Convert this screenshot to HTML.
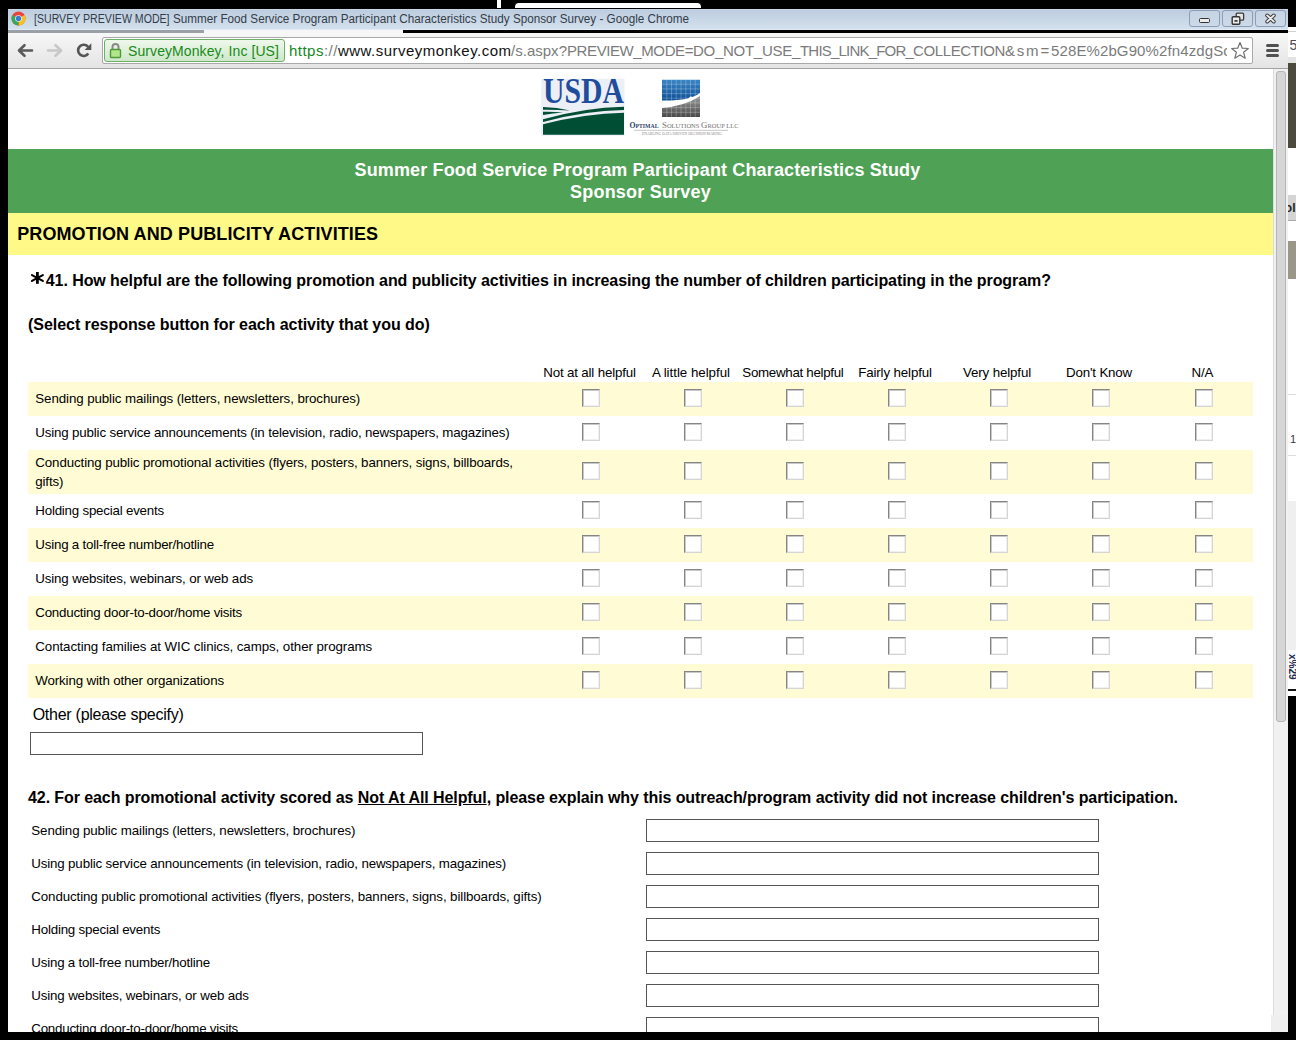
<!DOCTYPE html><html><head><meta charset="utf-8"><style>
*{margin:0;padding:0;box-sizing:border-box}
html,body{width:1296px;height:1040px;overflow:hidden;background:#000;font-family:"Liberation Sans",sans-serif}
.a{position:absolute}
.t{position:absolute;white-space:pre}
.cb{position:absolute;width:18px;height:18px;background:#fff;border-style:solid;border-width:1px;border-color:#858585 #d5d5d5 #d5d5d5 #858585;box-shadow:inset 1px 1px 0 #c9c9c9, inset -1px -1px 0 #f0f0f0}
.inp{position:absolute;height:23px;border:1px solid #555;background:#fff}
</style></head><body>
<div class="a" style="left:497px;top:0;width:4px;height:8px;background:#fff"></div><div class="a" style="left:515px;top:3px;width:186px;height:5px;background:#fff;border-radius:4px 4px 0 0"></div><div class="a" style="left:8px;top:9px;width:1280px;height:21px;background:linear-gradient(#bdcddf,#d3e0ed);border-top:1px solid #c7d6e6;border-bottom:1px solid #dfeaf6"></div><svg class="a" style="left:11px;top:11px" width="15" height="15" viewBox="0 0 30 30">
<circle cx="15" cy="15" r="14" fill="#e8453c"/>
<path d="M15 15 L27.1 8 A14 14 0 0 1 15 29 Z" fill="#fbc119"/>
<path d="M15 15 L15 29 A14 14 0 0 1 2.9 8 Z" fill="#3aa757"/>
<circle cx="15" cy="15" r="6.6" fill="#fff"/><circle cx="15" cy="15" r="5.4" fill="#3a7bd5"/></svg><div class="t" style="left:34.3px;top:12.84px;font-size:12px;line-height:12px;color:#333c48;transform:scaleX(0.8825);transform-origin:0 0;">[SURVEY PREVIEW MODE]</div>
<div class="t" style="left:173.2px;top:12.84px;font-size:12px;line-height:12px;color:#333c48;transform:scaleX(0.9746);transform-origin:0 0;">Summer Food Service Program Participant Characteristics Study Sponsor Survey - Google Chrome</div>
<div class="a" style="left:1189px;top:10px;width:31px;height:17px;border:1px solid #8e9cb5;border-radius:3px;background:linear-gradient(#c5d3e3,#ccd9e8)"></div><div class="a" style="left:1222px;top:10px;width:31px;height:17px;border:1px solid #8e9cb5;border-radius:3px;background:linear-gradient(#c5d3e3,#ccd9e8)"></div><div class="a" style="left:1255px;top:10px;width:31px;height:17px;border:1px solid #8e9cb5;border-radius:3px;background:linear-gradient(#c5d3e3,#ccd9e8)"></div><div class="a" style="left:1199px;top:18px;width:11px;height:5px;background:#ececec;border:1px solid #333;border-radius:1.5px"></div><svg class="a" style="left:1230px;top:12px" width="16" height="14" viewBox="0 0 16 14">
<rect x="6.2" y="1.2" width="7.4" height="7" rx="1" fill="#e6e6e6" stroke="#3a3a3a" stroke-width="1.3"/>
<rect x="2.2" y="4.7" width="7.6" height="7.6" rx="1" fill="#ececec" stroke="#333" stroke-width="1.4"/>
<rect x="4.4" y="8" width="3.2" height="1.8" fill="#444"/></svg><svg class="a" style="left:1264px;top:13px" width="13" height="11" viewBox="0 0 13 11">
<path d="M3.2 2.4 L9.8 8.6 M9.8 2.4 L3.2 8.6" stroke="#3a3a3a" stroke-width="3.8" stroke-linecap="round"/>
<path d="M3.2 2.4 L9.8 8.6 M9.8 2.4 L3.2 8.6" stroke="#efefef" stroke-width="1.9" stroke-linecap="round"/></svg><div class="a" style="left:8px;top:30px;width:196px;height:3px;background:#9ba0a6"></div><div class="a" style="left:204px;top:30px;width:199px;height:3px;background:#f6f6f6"></div><div class="a" style="left:8px;top:33px;width:1280px;height:35px;background:linear-gradient(#f7f7f7,#e4e4e4)"></div><div class="a" style="left:8px;top:68px;width:1280px;height:1px;background:#a3a3a3"></div><svg class="a" style="left:16px;top:42px" width="20" height="17" viewBox="0 0 20 17">
<path d="M8.5 3.2 L3 8.5 L8.5 13.8 M3.5 8.5 L16 8.5" fill="none" stroke="#5a5a5a" stroke-width="2.6" stroke-linecap="round" stroke-linejoin="round"/></svg><svg class="a" style="left:45px;top:42px" width="20" height="17" viewBox="0 0 20 17">
<path d="M10.5 3.2 L16 8.5 L10.5 13.8 M15.5 8.5 L3 8.5" fill="none" stroke="#c8c8c8" stroke-width="2.6" stroke-linecap="round" stroke-linejoin="round"/></svg><svg class="a" style="left:75px;top:42px" width="18" height="17" viewBox="0 0 18 17">
<path d="M13.3 11.6 A5.6 5.6 0 1 1 13.2 5" fill="none" stroke="#555" stroke-width="2.6"/>
<path d="M16.3 1.2 L16.3 8 L9.6 8 Z" fill="#555"/></svg><div class="a" style="left:102px;top:37px;width:1151px;height:27px;background:#fff;border:1px solid #a9a9a9;border-radius:2px"></div><div class="a" style="left:104px;top:39px;width:181px;height:23px;background:linear-gradient(#eef8ec,#cfe8cb);border:1px solid #6fb069;border-radius:3px"></div><svg class="a" style="left:109px;top:42px" width="13" height="17" viewBox="0 0 13 17">
<path d="M3.5 7.5 V5 A3 3 0 0 1 9.5 5 V7.5" fill="none" stroke="#8a8a8a" stroke-width="2"/>
<rect x="1.5" y="7.5" width="10" height="8" rx="1" fill="#b3e58a" stroke="#4e9a3a" stroke-width="1.4"/></svg><div class="t " style="left:128px;top:44.15px;font-size:14px;line-height:14px;color:#178a17;letter-spacing:0.086px;">SurveyMonkey, Inc [US]</div>
<div class="a" style="left:286px;top:38px;width:941px;height:25px;overflow:hidden"><div class="t" style="left:3px;top:5.30px;font-size:15px;line-height:15px;letter-spacing:0.482px"><span style="color:#12891a">https</span><span style="color:#7b7b7b">://</span><span style="color:#111">www.surveymonkey.com</span></div><div class="t" style="left:225px;top:5.30px;font-size:15px;line-height:15px;letter-spacing:0.016px;color:#7b7b7b">/s.aspx?</div><div class="t" style="left:281px;top:5.30px;font-size:15px;line-height:15px;letter-spacing:-0.405px;color:#7b7b7b">PREVIEW_MODE=</div><div class="t" style="left:407px;top:5.30px;font-size:15px;line-height:15px;letter-spacing:-0.274px;color:#7b7b7b">DO_NOT_USE_</div><div class="t" style="left:514px;top:5.30px;font-size:15px;line-height:15px;letter-spacing:-0.799px;color:#7b7b7b">THIS_LINK_FOR_</div><div class="t" style="left:627px;top:5.30px;font-size:15px;line-height:15px;letter-spacing:-0.384px;color:#7b7b7b">COLLECTION</div><div class="t" style="left:719px;top:5.30px;font-size:15px;line-height:15px;letter-spacing:1.809px;color:#7b7b7b">&amp;sm=</div><div class="t" style="left:765px;top:5.30px;font-size:15px;line-height:15px;letter-spacing:0.117px;color:#7b7b7b">528E%2bG90%2fn4zdgSc</div></div><svg class="a" style="left:1230px;top:41px" width="20" height="20" viewBox="0 0 20 20">
<path d="M10 1.6 L12.3 7.2 L18.3 7.5 L13.6 11.3 L15.2 17.2 L10 13.9 L4.8 17.2 L6.4 11.3 L1.7 7.5 L7.7 7.2 Z" fill="#fff" stroke="#707070" stroke-width="1.2" stroke-linejoin="round"/></svg><div class="a" style="left:1266px;top:44px;width:13px;height:3px;border-radius:1.5px;background:#505050"></div><div class="a" style="left:1266px;top:49px;width:13px;height:3px;border-radius:1.5px;background:#505050"></div><div class="a" style="left:1266px;top:54px;width:13px;height:3px;border-radius:1.5px;background:#505050"></div><div class="a" style="left:1288px;top:27px;width:8px;height:30px;background:#fff"></div><div class="a" style="left:1288px;top:31px;width:8px;height:1px;background:#d0d0d0"></div><div class="t " style="left:1289.5px;top:38.15px;font-size:14px;line-height:14px;color:#4a4a55;letter-spacing:0.000px;">5</div>
<div class="a" style="left:1288px;top:57px;width:8px;height:6px;background:#e3e3e3"></div><div class="a" style="left:1288px;top:63px;width:8px;height:85px;background:#4b4a3d"></div><div class="a" style="left:1288px;top:148px;width:8px;height:548px;background:#fff"></div><div class="a" style="left:1288px;top:195px;width:8px;height:26px;background:#d4d4d4;border-bottom:1px solid #a8a8a8"></div><div class="a" style="left:1288px;top:195px;width:8px;height:25px;overflow:hidden"><div class="t " style="left:-3.2px;top:6.84px;font-size:12px;line-height:12px;font-weight:bold;color:#222;letter-spacing:0.000px;">oll</div>
</div><div class="a" style="left:1288px;top:241px;width:8px;height:38px;background:#9a978a"></div><div class="a" style="left:1288px;top:394px;width:8px;height:1px;background:#ddd"></div><div class="t " style="left:1290px;top:433.69px;font-size:11px;line-height:11px;color:#333;letter-spacing:0.000px;">1</div>
<div class="a" style="left:1288px;top:455px;width:8px;height:1px;background:#ddd"></div><div class="a" style="left:1288px;top:501px;width:8px;height:149px;background:#efefef"></div><div class="a" style="left:1288px;top:689px;width:8px;height:2px;background:#111"></div><svg class="a" style="left:1288px;top:650px" width="8" height="39" viewBox="0 0 8 39"><text transform="translate(0.8,4) rotate(90)" font-family="Liberation Sans" font-size="10" font-weight="bold" fill="#1e2a50">x%29</text></svg><div class="a" style="left:8px;top:69px;width:1265px;height:963px;background:#fff;overflow:hidden" id="c"></div><div class="a" style="left:1273px;top:69px;width:15px;height:963px;background:#f1f1f1;border-left:1px solid #dcdcdc"></div><div class="a" style="left:1276px;top:71px;width:10px;height:651px;background:#d6d6d6;border:1px solid #b5b5b5;border-radius:3px"></div><div class="a" style="left:1271px;top:1015px;width:16px;height:17px;background:#efefef"></div><div class="a" style="left:0;top:0;width:1273px;height:1032px;overflow:hidden;clip-path:inset(69px 0 0 8px)"><svg class="a" style="left:541px;top:78px" width="85" height="59" viewBox="541 78 85 59">
<rect x="541.2" y="78.8" width="83.3" height="57" fill="#eceff6"/>
<text x="583.5" y="103.3" text-anchor="middle" font-family="Liberation Serif" font-weight="bold" font-size="35" fill="#1f4d9d" textLength="81" lengthAdjust="spacingAndGlyphs">USDA</text>
<path d="M543 107 L543 109.8 Q556 109.6 570 110.6 Q557 107.4 543 107 Z" fill="#004f35"/>
<path d="M543 111.8 L543 115 Q553 113.6 563 112.6 Q553 111.5 543 111.8 Z" fill="#004f35"/>
<path d="M543 119.3 Q585 107.6 624 106.8 L624 110 Q585 110.6 543 121.9 Z" fill="#004f35"/>
<path d="M543 124.3 Q585 113.6 624 112.8 L624 134.8 L543 134.8 Z" fill="#004f35"/>
</svg><svg class="a" style="left:660px;top:78px" width="42" height="41" viewBox="660 78 42 41"><defs><linearGradient id="bl" x1="0" y1="0" x2="0" y2="1"><stop offset="0" stop-color="#3b86c4"/><stop offset="1" stop-color="#0d4f96"/></linearGradient><linearGradient id="gr" x1="0" y1="0" x2="0" y2="1"><stop offset="0" stop-color="#9a9a9a"/><stop offset="1" stop-color="#4a4a4a"/></linearGradient><clipPath id="cp"><rect x="662" y="79.5" width="38" height="37.5"/></clipPath></defs><g clip-path="url(#cp)"><path d="M662 79.5 L700 79.5 L700 93 Q690 101 662 100.5 Z" fill="url(#bl)"/><path d="M662 108 Q685 106 700 96 L700 117 L662 117 Z" fill="url(#gr)"/><line x1="666.8" y1="79" x2="666.8" y2="117" stroke="#fff" stroke-opacity="0.35" stroke-width="0.7"/><line x1="671.5" y1="79" x2="671.5" y2="117" stroke="#fff" stroke-opacity="0.35" stroke-width="0.7"/><line x1="676.2" y1="79" x2="676.2" y2="117" stroke="#fff" stroke-opacity="0.35" stroke-width="0.7"/><line x1="681.0" y1="79" x2="681.0" y2="117" stroke="#fff" stroke-opacity="0.35" stroke-width="0.7"/><line x1="685.8" y1="79" x2="685.8" y2="117" stroke="#fff" stroke-opacity="0.35" stroke-width="0.7"/><line x1="690.5" y1="79" x2="690.5" y2="117" stroke="#fff" stroke-opacity="0.35" stroke-width="0.7"/><line x1="695.2" y1="79" x2="695.2" y2="117" stroke="#fff" stroke-opacity="0.35" stroke-width="0.7"/><line x1="662" y1="84.2" x2="700" y2="84.2" stroke="#fff" stroke-opacity="0.35" stroke-width="0.7"/><line x1="662" y1="88.9" x2="700" y2="88.9" stroke="#fff" stroke-opacity="0.35" stroke-width="0.7"/><line x1="662" y1="93.6" x2="700" y2="93.6" stroke="#fff" stroke-opacity="0.35" stroke-width="0.7"/><line x1="662" y1="98.2" x2="700" y2="98.2" stroke="#fff" stroke-opacity="0.35" stroke-width="0.7"/><line x1="662" y1="102.9" x2="700" y2="102.9" stroke="#fff" stroke-opacity="0.35" stroke-width="0.7"/><line x1="662" y1="107.6" x2="700" y2="107.6" stroke="#fff" stroke-opacity="0.35" stroke-width="0.7"/><line x1="662" y1="112.3" x2="700" y2="112.3" stroke="#fff" stroke-opacity="0.35" stroke-width="0.7"/><circle cx="691" cy="98.5" r="2" fill="#fff"/></g></svg><svg class="a" style="left:628px;top:119px" width="112" height="17" viewBox="628 119 112 17">
<text x="629.5" y="127.8" font-family="Liberation Serif" font-weight="bold" fill="#2b3f6c" textLength="29" lengthAdjust="spacingAndGlyphs"><tspan font-size="8.5">O</tspan><tspan font-size="6.3">PTIMAL</tspan></text>
<text x="662" y="127.8" font-family="Liberation Serif" fill="#707070" textLength="76.5" lengthAdjust="spacingAndGlyphs"><tspan font-size="8.5">S</tspan><tspan font-size="6.3">OLUTIONS </tspan><tspan font-size="8.5">G</tspan><tspan font-size="6.3">ROUP LLC</tspan></text>
<line x1="634" y1="130.3" x2="728" y2="130.3" stroke="#a0a0a0" stroke-width="0.6"/>
<text x="642" y="134.6" font-family="Liberation Serif" font-size="3.2" fill="#888" textLength="80" lengthAdjust="spacingAndGlyphs">ENABLING DATA-DRIVEN DECISION MAKING</text>
</svg><div class="a" style="left:8px;top:149px;width:1265px;height:64px;background:#4fa155"></div><div class="t " style="left:354.5px;top:160.76px;font-size:18px;line-height:18px;font-weight:bold;color:#fff;letter-spacing:0.143px;">Summer Food Service Program Participant Characteristics Study</div>
<div class="t " style="left:570.0px;top:182.76px;font-size:18px;line-height:18px;font-weight:bold;color:#fff;letter-spacing:0.210px;">Sponsor Survey</div>
<div class="a" style="left:8px;top:213px;width:1265px;height:42px;background:#fffa87"></div><div class="t " style="left:17.2px;top:224.76px;font-size:18px;line-height:18px;font-weight:bold;color:#000;letter-spacing:0.108px;">PROMOTION AND PUBLICITY ACTIVITIES</div>
<svg class="a" style="left:30px;top:271px" width="15" height="14" viewBox="30 271 15 14"><path d="M37.4 272 V283.8" stroke="#000" stroke-width="2.8"/><path d="M32 275.1 L42.8 280.9 M32 280.9 L42.8 275.1" stroke="#000" stroke-width="2.2" stroke-linecap="round"/><rect x="35.4" y="276.3" width="4" height="3.6" fill="#000"/></svg><div class="t " style="left:45.8px;top:273.16px;font-size:16px;line-height:16px;font-weight:bold;color:#000;letter-spacing:-0.082px;">41. How helpful are the following promotion and publicity activities in increasing the number of children participating in the program?</div>
<div class="t " style="left:28.1px;top:316.86px;font-size:16px;line-height:16px;font-weight:bold;color:#000;letter-spacing:-0.053px;">(Select response button for each activity that you do)</div>
<div class="t " style="left:543.2px;top:365.72px;font-size:13.33px;line-height:13.33px;color:#000;letter-spacing:-0.165px;">Not at all helpful</div>
<div class="t " style="left:651.9px;top:365.72px;font-size:13.33px;line-height:13.33px;color:#000;letter-spacing:-0.028px;">A little helpful</div>
<div class="t " style="left:742.3px;top:365.72px;font-size:13.33px;line-height:13.33px;color:#000;letter-spacing:-0.295px;">Somewhat helpful</div>
<div class="t " style="left:858.140625px;top:365.72px;font-size:13.33px;line-height:13.33px;color:#000;letter-spacing:-0.132px;">Fairly helpful</div>
<div class="t " style="left:963.0234375px;top:365.72px;font-size:13.33px;line-height:13.33px;color:#000;letter-spacing:-0.141px;">Very helpful</div>
<div class="t " style="left:1065.953125px;top:365.72px;font-size:13.33px;line-height:13.33px;color:#000;letter-spacing:-0.163px;">Don't Know</div>
<div class="t " style="left:1191.6px;top:365.72px;font-size:13.33px;line-height:13.33px;color:#000;letter-spacing:-0.206px;">N/A</div>
<div class="a" style="left:28px;top:382px;width:1225px;height:34px;background:#fffcd5"></div><div class="t " style="left:35.3px;top:391.72px;font-size:13.33px;line-height:13.33px;color:#000;letter-spacing:-0.098px;">Sending public mailings (letters, newsletters, brochures)</div>
<div class="cb" style="left:582px;top:389px"></div><div class="cb" style="left:684px;top:389px"></div><div class="cb" style="left:786px;top:389px"></div><div class="cb" style="left:888px;top:389px"></div><div class="cb" style="left:990px;top:389px"></div><div class="cb" style="left:1092px;top:389px"></div><div class="cb" style="left:1195px;top:389px"></div><div class="t " style="left:35.3px;top:425.72px;font-size:13.33px;line-height:13.33px;color:#000;letter-spacing:-0.165px;">Using public service announcements (in television, radio, newspapers, magazines)</div>
<div class="cb" style="left:582px;top:423px"></div><div class="cb" style="left:684px;top:423px"></div><div class="cb" style="left:786px;top:423px"></div><div class="cb" style="left:888px;top:423px"></div><div class="cb" style="left:990px;top:423px"></div><div class="cb" style="left:1092px;top:423px"></div><div class="cb" style="left:1195px;top:423px"></div><div class="a" style="left:28px;top:450px;width:1225px;height:44px;background:#fffcd5"></div><div class="t " style="left:35.3px;top:456.22px;font-size:13.33px;line-height:13.33px;color:#000;letter-spacing:-0.115px;">Conducting public promotional activities (flyers, posters, banners, signs, billboards,</div>
<div class="t " style="left:35.3px;top:475.02px;font-size:13.33px;line-height:13.33px;color:#000;letter-spacing:-0.148px;">gifts)</div>
<div class="cb" style="left:582px;top:462px"></div><div class="cb" style="left:684px;top:462px"></div><div class="cb" style="left:786px;top:462px"></div><div class="cb" style="left:888px;top:462px"></div><div class="cb" style="left:990px;top:462px"></div><div class="cb" style="left:1092px;top:462px"></div><div class="cb" style="left:1195px;top:462px"></div><div class="t " style="left:35.3px;top:503.72px;font-size:13.33px;line-height:13.33px;color:#000;letter-spacing:-0.216px;">Holding special events</div>
<div class="cb" style="left:582px;top:501px"></div><div class="cb" style="left:684px;top:501px"></div><div class="cb" style="left:786px;top:501px"></div><div class="cb" style="left:888px;top:501px"></div><div class="cb" style="left:990px;top:501px"></div><div class="cb" style="left:1092px;top:501px"></div><div class="cb" style="left:1195px;top:501px"></div><div class="a" style="left:28px;top:528px;width:1225px;height:34px;background:#fffcd5"></div><div class="t " style="left:35.3px;top:537.72px;font-size:13.33px;line-height:13.33px;color:#000;letter-spacing:-0.205px;">Using a toll-free number/hotline</div>
<div class="cb" style="left:582px;top:535px"></div><div class="cb" style="left:684px;top:535px"></div><div class="cb" style="left:786px;top:535px"></div><div class="cb" style="left:888px;top:535px"></div><div class="cb" style="left:990px;top:535px"></div><div class="cb" style="left:1092px;top:535px"></div><div class="cb" style="left:1195px;top:535px"></div><div class="t " style="left:35.3px;top:571.72px;font-size:13.33px;line-height:13.33px;color:#000;letter-spacing:-0.149px;">Using websites, webinars, or web ads</div>
<div class="cb" style="left:582px;top:569px"></div><div class="cb" style="left:684px;top:569px"></div><div class="cb" style="left:786px;top:569px"></div><div class="cb" style="left:888px;top:569px"></div><div class="cb" style="left:990px;top:569px"></div><div class="cb" style="left:1092px;top:569px"></div><div class="cb" style="left:1195px;top:569px"></div><div class="a" style="left:28px;top:596px;width:1225px;height:34px;background:#fffcd5"></div><div class="t " style="left:35.3px;top:605.72px;font-size:13.33px;line-height:13.33px;color:#000;letter-spacing:-0.237px;">Conducting door-to-door/home visits</div>
<div class="cb" style="left:582px;top:603px"></div><div class="cb" style="left:684px;top:603px"></div><div class="cb" style="left:786px;top:603px"></div><div class="cb" style="left:888px;top:603px"></div><div class="cb" style="left:990px;top:603px"></div><div class="cb" style="left:1092px;top:603px"></div><div class="cb" style="left:1195px;top:603px"></div><div class="t " style="left:35.3px;top:639.72px;font-size:13.33px;line-height:13.33px;color:#000;letter-spacing:-0.082px;">Contacting families at WIC clinics, camps, other programs</div>
<div class="cb" style="left:582px;top:637px"></div><div class="cb" style="left:684px;top:637px"></div><div class="cb" style="left:786px;top:637px"></div><div class="cb" style="left:888px;top:637px"></div><div class="cb" style="left:990px;top:637px"></div><div class="cb" style="left:1092px;top:637px"></div><div class="cb" style="left:1195px;top:637px"></div><div class="a" style="left:28px;top:664px;width:1225px;height:34px;background:#fffcd5"></div><div class="t " style="left:35.3px;top:673.72px;font-size:13.33px;line-height:13.33px;color:#000;letter-spacing:-0.140px;">Working with other organizations</div>
<div class="cb" style="left:582px;top:671px"></div><div class="cb" style="left:684px;top:671px"></div><div class="cb" style="left:786px;top:671px"></div><div class="cb" style="left:888px;top:671px"></div><div class="cb" style="left:990px;top:671px"></div><div class="cb" style="left:1092px;top:671px"></div><div class="cb" style="left:1195px;top:671px"></div><div class="t " style="left:32.65px;top:707.46px;font-size:16px;line-height:16px;color:#000;letter-spacing:-0.256px;">Other (please specify)</div>
<div class="inp" style="left:30px;top:732px;width:393px"></div><div class="t" style="left:28px;top:790.46px;font-size:16px;line-height:16px;font-weight:bold;letter-spacing:-0.083px">42. For each promotional activity scored as <u>Not At All Helpful</u>, please explain why this outreach/program activity did not increase children's participation.</div><div class="t " style="left:31.3px;top:823.72px;font-size:13.33px;line-height:13.33px;color:#000;letter-spacing:-0.112px;">Sending public mailings (letters, newsletters, brochures)</div>
<div class="inp" style="left:646px;top:819px;width:453px"></div><div class="t " style="left:31.3px;top:856.72px;font-size:13.33px;line-height:13.33px;color:#000;letter-spacing:-0.159px;">Using public service announcements (in television, radio, newspapers, magazines)</div>
<div class="inp" style="left:646px;top:852px;width:453px"></div><div class="t " style="left:31.3px;top:889.72px;font-size:13.33px;line-height:13.33px;color:#000;letter-spacing:-0.105px;">Conducting public promotional activities (flyers, posters, banners, signs, billboards, gifts)</div>
<div class="inp" style="left:646px;top:885px;width:453px"></div><div class="t " style="left:31.3px;top:922.72px;font-size:13.33px;line-height:13.33px;color:#000;letter-spacing:-0.203px;">Holding special events</div>
<div class="inp" style="left:646px;top:918px;width:453px"></div><div class="t " style="left:31.3px;top:955.72px;font-size:13.33px;line-height:13.33px;color:#000;letter-spacing:-0.208px;">Using a toll-free number/hotline</div>
<div class="inp" style="left:646px;top:951px;width:453px"></div><div class="t " style="left:31.3px;top:988.72px;font-size:13.33px;line-height:13.33px;color:#000;letter-spacing:-0.154px;">Using websites, webinars, or web ads</div>
<div class="inp" style="left:646px;top:984px;width:453px"></div><div class="t " style="left:31.3px;top:1021.72px;font-size:13.33px;line-height:13.33px;color:#000;letter-spacing:-0.231px;">Conducting door-to-door/home visits</div>
<div class="inp" style="left:646px;top:1017px;width:453px"></div></div></body></html>
